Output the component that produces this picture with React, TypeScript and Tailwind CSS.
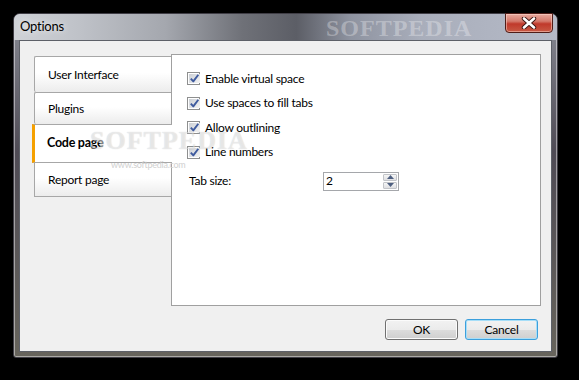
import React from "react";

const Check = () => (
  <span className="w-[13px] h-[13px] shrink-0 border border-[#8e8f8f] bg-white p-px flex">
    <span className="flex-1 bg-[linear-gradient(135deg,#cbcfd5,#f4f4f4)] flex items-center justify-center">
      <svg width="11" height="11" viewBox="0 0 11 11">
        <path d="M1.8 5.6 L4.3 8.4 L9.3 1.8" stroke="#3e5a9e" strokeWidth="1.9" fill="none" strokeLinejoin="round" />
      </svg>
    </span>
  </span>
);

const Row = ({ label }: { label: string }) => (
  <div className="flex items-center h-[13px]">
    <Check />
    <span className="ml-[5px] text-[12px] leading-none text-black">{label}</span>
  </div>
);

const Tab = ({ label, h, last }: { label: string; h: string; last?: boolean }) => (
  <div
    className={`${h} w-[137px] flex items-center pl-[13px] border-l border-t border-[#a7a7a7] ${
      last ? "border-b" : ""
    } bg-[linear-gradient(to_bottom,#ffffff,#ffffff_45%,#ececec)] text-[12px] text-black rounded-l-[2px]`}
  >
    {label}
  </div>
);

const Btn = ({ label, def }: { label: string; def?: boolean }) => (
  <div
    className={`w-[73px] h-[21px] rounded-[3px] border ${
      def ? "border-[#3c9fdc] shadow-[inset_0_0_0_1px_#a6def8]" : "border-[#707070] shadow-[inset_0_0_0_1px_#fbfbfb]"
    } bg-[linear-gradient(to_bottom,#f2f2f2,#ebebeb_50%,#dddddd_51%,#cfcfcf)] flex items-center justify-center text-[12px] text-black`}
  >
    {label}
  </div>
);

export default function App() {
  return (
    <div className="w-[579px] h-[380px] bg-black pt-[13px] pl-[13px] font-['Lato',sans-serif] tracking-[-0.25px]">
      <div className="relative w-[545px] h-[345px] rounded-t-[7px] rounded-b-[3px] border border-[#3f3d45] bg-[linear-gradient(to_bottom,#8a8c96,#4f4b55_40%,#67645c)] flex flex-col shadow-[inset_0_0_0_1px_rgba(255,255,255,0.45)]">
        {/* title bar */}
        <div className="relative h-[26px] shrink-0 rounded-t-[6px] bg-[linear-gradient(to_right,#cfd2d7,#bfc2c8_12%,#a4a7ae_28%,#6f7178_42%,#5c5e66_52%,#8e93a0_62%,#a9aebb_75%,#b5bac7_100%)] flex items-center pl-[6px] overflow-hidden">
          <span className="text-[13px] text-black [text-shadow:0_0_6px_rgba(255,255,255,0.9)]">Options</span>
          <span className="absolute left-[312px] top-[2px] text-[24px] font-bold tracking-[1px] text-white/30 font-['Liberation_Serif',serif] leading-none">
            SOFTPEDIA
          </span>
        </div>
        {/* close button */}
        <div className="absolute top-[-1px] right-[4px] w-[48px] h-[20px] rounded-b-[4px] border border-[#4f1d18] bg-[linear-gradient(to_bottom,#e8aa9f,#d4796b_40%,#c0392b_55%,#c85a45)] shadow-[inset_0_0_0_1px_rgba(255,220,210,0.5)] flex items-center justify-center">
          <svg width="16" height="12" viewBox="0 0 16 12">
            <path d="M3 1.5 L13 10.5 M13 1.5 L3 10.5" stroke="#3a1410" strokeWidth="4.4" strokeLinecap="round" />
            <path d="M3 1.5 L13 10.5 M13 1.5 L3 10.5" stroke="#ffffff" strokeWidth="2.6" strokeLinecap="round" />
          </svg>
        </div>
        {/* client */}
        <div className="flex-1 mx-[5px] mb-[5px] border border-[#5d6068] bg-[#f0f0f0] flex flex-col pt-[13px] pl-[14px] pr-[10px] pb-[11px] relative">
          <div className="flex h-[252px]">
            <div className="w-[137px] pt-[2px] flex flex-col shrink-0">
              <Tab label="User Interface" h="h-[36px]" />
              <Tab label="Plugins" h="h-[32px]" />
              <div className="relative z-10 h-[39px] w-[140px] -ml-[2px] flex items-center pl-[12px] border-l-[3px] border-l-[#f5a000] border-t border-b border-t-[#a7a7a7] border-b-[#a7a7a7] bg-white text-[12.5px] font-bold text-black">
                Code page
              </div>
              <div className="h-[34px] w-[137px] flex items-center pl-[13px] border-l border-b border-[#a7a7a7] bg-[linear-gradient(to_bottom,#ffffff,#ffffff_45%,#ececec)] text-[12px] text-black">
                Report page
              </div>
            </div>
            <div className="flex-1 border border-[#a0a0a0] bg-white pl-[15px] pt-[17px] flex flex-col">
              <div className="flex flex-col gap-[11.5px]">
                <Row label="Enable virtual space" />
                <Row label="Use spaces to fill tabs" />
                <Row label="Allow outlining" />
                <Row label="Line numbers" />
              </div>
              <div className="flex items-center mt-[13px] h-[19px]">
                <span className="w-[136px] pl-[2px] text-[12px] text-black">Tab size:</span>
                <div className="w-[76px] h-[19px] border border-[#a5a7ab] bg-white flex items-center">
                  <span className="flex-1 pl-[2px] text-[12px] text-black leading-none">2</span>
                  <div className="w-[16px] h-full flex flex-col gap-px p-px">
                    <div className="flex-1 border border-[#c2c4c8] rounded-[1px] bg-[linear-gradient(to_bottom,#f6f6f6,#dedfe2)] flex items-center justify-center">
                      <svg width="7" height="4" viewBox="0 0 7 4"><path d="M0 4 L3.5 0 L7 4 Z" fill="#4e5f80" /></svg>
                    </div>
                    <div className="flex-1 border border-[#c2c4c8] rounded-[1px] bg-[linear-gradient(to_bottom,#f6f6f6,#dedfe2)] flex items-center justify-center">
                      <svg width="7" height="4" viewBox="0 0 7 4"><path d="M0 0 L7 0 L3.5 4 Z" fill="#4e5f80" /></svg>
                    </div>
                  </div>
                </div>
              </div>
            </div>
          </div>
          <div className="mt-[13px] flex justify-end gap-[7px] pr-[3px]">
            <Btn label="OK" />
            <Btn label="Cancel" def />
          </div>
          {/* watermark */}
          <span className="absolute left-[70px] top-[87px] z-20 text-[26px] font-bold tracking-[1px] text-white/50 [text-shadow:0_0_1px_rgba(0,0,0,0.2)] font-['Liberation_Serif',serif] leading-none pointer-events-none">
            SOFTPEDIA
          </span>
          <span className="absolute left-[91px] top-[119px] z-20 text-[9px] text-[#d0d0d0] leading-none pointer-events-none">
            www.softpedia.com
          </span>
        </div>
      </div>
    </div>
  );
}
